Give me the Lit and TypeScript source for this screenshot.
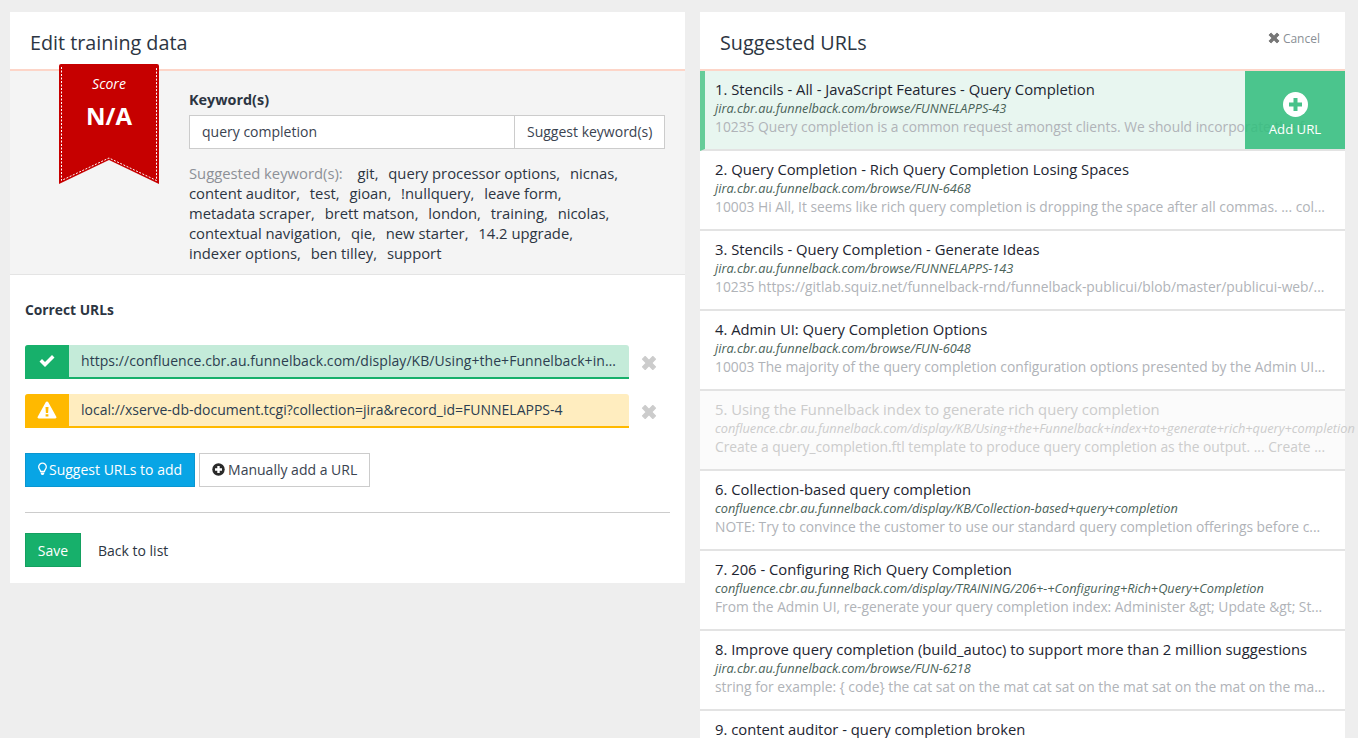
import { LitElement, html, css } from "lit";
import { customElement } from "lit/decorators.js";

const times = html`<svg viewBox="0 0 16 16" class="x"><path d="M2.2 4.6 4.6 2.2 8 5.6l3.4-3.4 2.4 2.4L10.4 8l3.4 3.4-2.4 2.4L8 10.4l-3.4 3.4-2.4-2.4L5.6 8z" fill="currentColor" stroke="currentColor" stroke-width="1" stroke-linejoin="round"/></svg>`;

const items = [
  ["1. Stencils - All - JavaScript Features - Query Completion", "jira.cbr.au.funnelback.com/browse/FUNNELAPPS-43", "10235 Query completion is a common request amongst clients. We should incorporate the f..."],
  ["2. Query Completion - Rich Query Completion Losing Spaces", "jira.cbr.au.funnelback.com/browse/FUN-6468", "10003 Hi All, It seems like rich query completion is dropping the space after all commas. ... col..."],
  ["3. Stencils - Query Completion - Generate Ideas", "jira.cbr.au.funnelback.com/browse/FUNNELAPPS-143", "10235 https://gitlab.squiz.net/funnelback-rnd/funnelback-publicui/blob/master/publicui-web/..."],
  ["4. Admin UI: Query Completion Options", "jira.cbr.au.funnelback.com/browse/FUN-6048", "10003 The majority of the query completion configuration options presented by the Admin UI..."],
  ["5. Using the Funnelback index to generate rich query completion", "confluence.cbr.au.funnelback.com/display/KB/Using+the+Funnelback+index+to+generate+rich+query+completion", "Create a query_completion.ftl template to produce query completion as the output. ... Create ..."],
  ["6. Collection-based query completion", "confluence.cbr.au.funnelback.com/display/KB/Collection-based+query+completion", "NOTE: Try to convince the customer to use our standard query completion offerings before c..."],
  ["7. 206 - Configuring Rich Query Completion", "confluence.cbr.au.funnelback.com/display/TRAINING/206+-+Configuring+Rich+Query+Completion", "From the Admin UI, re-generate your query completion index: Administer &gt; Update &gt; St..."],
  ["8. Improve query completion (build_autoc) to support more than 2 million suggestions", "jira.cbr.au.funnelback.com/browse/FUN-6218", "string for example: { code} the cat sat on the mat cat sat on the mat sat on the mat on the ma..."],
  ["9. content auditor - query completion broken", "", ""],
];

const keywords = ["git", "query processor options", "nicnas", "content auditor", "test", "gioan", "!nullquery", "leave form", "metadata scraper", "brett matson", "london", "training", "nicolas", "contextual navigation", "qie", "new starter", "14.2 upgrade", "indexer options", "ben tilley", "support"];

@customElement("app-root")
export class AppRoot extends LitElement {
  static styles = css`
    :host { display: block; height: 738px; overflow: hidden; background: #eee; font-family: "Open Sans", sans-serif; font-size: 14px; color: #2c3542; }
    * { box-sizing: border-box; }
    .page { display: flex; align-items: flex-start; padding: 12px 13px 0 10px; gap: 15px; }
    .panel { background: #fff; position: relative; }
    .left { width: 675px; height: 571px; }
    .right { width: 645px; }
    .head { height: 59px; border-bottom: 2px solid #fdd5c8; display: flex; align-items: center; justify-content: space-between; padding: 5px 25px 0 20px; }
    h2 { margin: 0; font-size: 19.75px; font-weight: 400; line-height: 28px; color: #2c3542; }
    .cancel { display: flex; align-items: center; gap: 2px; font-size: 12px; color: #8a8f96; margin-top: -10px; }
    .cancel .x { width: 14px; height: 14px; color: #777; }
    .ribbon { position: absolute; left: 49px; top: 52px; width: 100px; height: 120px; color: #fff; text-align: center; }
    .ribbon svg { position: absolute; inset: 0; }
    .ribbon .sc { position: absolute; left: 0; right: 0; top: 10px; font-style: italic; font-size: 14px; line-height: 20px; }
    .ribbon .na { position: absolute; left: 0; right: 0; top: 35px; font-weight: 700; font-size: 24px; line-height: 34px; }
    .kw { height: 204px; background: #f4f4f4; border-bottom: 1px solid #e4e4e4; padding: 18px 20px 0 179px; }
    label { display: block; font-weight: 700; font-size: 14.4px; line-height: 22px; margin-bottom: 4px; }
    .ig { display: flex; height: 34px; width: 476px; background: #fff; border: 1px solid #ccc; }
    .ig .in { flex: 1; padding: 0 12px; line-height: 32px; font-size: 14px; color: #3a4350; border-right: 1px solid #ccc; }
    .ig .bt { width: 149px; flex: none; padding-left: 12px; line-height: 32px; font-size: 14px; color: #3a4350; white-space: nowrap; }
    .sug { margin-top: 14px; line-height: 20px; font-size: 14.8px; color: #2c3542; width: 450px; }
    .sug .lbl { color: #8c9097; margin-right: 11px; }
    .sug .k { margin-right: 6px; display: inline-block; }
    .body { padding: 25px 15px 0; }
    .cu { font-weight: 700; font-size: 13.8px; line-height: 20px; }
    .urls { margin-top: 25px; display: flex; flex-direction: column; gap: 15px; }
    .urlrow { display: flex; align-items: center; }
    .url { width: 604px; height: 34px; flex: none; display: flex; border-radius: 3px 3px 0 0; overflow: hidden; border-bottom: 2px solid; font-size: 14px; line-height: 32px; }
    .url.ok { background: #c4ebd9; border-color: #17b06b; }
    .url.warn { background: #ffedbf; border-color: #ffb900; }
    .url .ic { width: 44px; flex: none; display: flex; align-items: center; justify-content: center; }
    .url.ok .ic { background: #17b06b; }
    .url.warn .ic { background: #ffb900; }
    .url .t { padding-left: 12px; padding-right: 9px; flex: 1; min-width: 0; white-space: nowrap; overflow: hidden; text-overflow: ellipsis; color: #2c3e50; }
    .url.ok .t { letter-spacing: 0.06px; }
    .urlrow .x { width: 18px; height: 18px; margin-left: 11px; color: #ccc; margin-top: 2px; }
    .btns { display: flex; gap: 4px; margin-top: 25px; }
    .btn { height: 34px; display: flex; align-items: center; gap: 3px; padding: 0 12px 2px; font-size: 14px; border: 1px solid #ccc; color: #3a4350; background: #fff; }
    .btn.blue { background: #08a5e5; border-color: #0a96d0; color: #fff; gap: 2px; padding-right: 12px; }
    .btn svg { flex: none; }
    hr { border: 0; border-top: 1px solid #ccc; margin: 25px 0 20px; }
    .foot { display: flex; align-items: center; gap: 17px; }
    .save { height: 34px; width: 56px; background: #17b06b; border: 1px solid #14a060; color: #fff; text-align: center; line-height: 34px; font-size: 14px; }
    .item { height: 80px; border-bottom: 2px solid #e3e3e3; padding: 8px 15px 0; position: relative; overflow: hidden; }
    .item .a { font-size: 14.8px; line-height: 21px; color: #1d2531; white-space: nowrap; }
    .item .u { font-size: 12.75px; font-style: italic; line-height: 16px; color: #4a6258; white-space: nowrap; }
    .item .d { font-size: 13.8px; line-height: 19px; margin-top: 1px; color: #b0b3b8; white-space: nowrap; }
    .item.sel { background: #e8f6f0; border-left: 5px solid #66cc99; padding-left: 10px; }
    .item.dim { background: #fbfbfb; overflow: visible; }
    .item.dim .a, .item.dim .u, .item.dim .d { color: #ccc; }
    .add { position: absolute; right: 0; top: 0; bottom: 0; width: 100px; background: rgba(52, 190, 126, 0.88); color: #fff; display: flex; flex-direction: column; align-items: center; justify-content: flex-start; padding-top: 21px; font-size: 13.2px; line-height: 18px; }
    .add svg { display: block; margin-bottom: 3px; }
  `;

  render() {
    return html`<div class="page">
      <section class="panel left">
        <div class="head"><h2>Edit training data</h2></div>
        <div class="ribbon">
          <svg viewBox="0 0 100 120" width="100" height="120">
            <path d="M2 0H98Q100 0 100 2V120L50 96 0 120V2Q0 0 2 0Z" fill="#c60000"/>
            <path d="M2.5 3V116.5L50 94 97.500 116.5V3" fill="none" stroke="#fff" stroke-width="1" stroke-dasharray="2 1.500"/>
          </svg>
          <div class="sc">Score</div>
          <div class="na">N/A</div>
        </div>
        <div class="kw">
          <label>Keyword(s)</label>
          <div class="ig"><div class="in">query completion</div><div class="bt">Suggest keyword(s)</div></div>
          <div class="sug"><span class="lbl">Suggested keyword(s):</span> ${keywords.map((k, i) => html`<span class="k">${k}${i < keywords.length - 1 ? "," : ""}</span> `)}</div>
        </div>
        <div class="body">
          <div class="cu">Correct URLs</div>
          <div class="urls">
            <div class="urlrow">
              <div class="url ok"><span class="ic"><svg width="18" height="14" viewBox="0 0 18 14"><path d="M1.500 7.500 4 5l3 3 7-7 2.500 2.500L7 13z" fill="#fff"/></svg></span><span class="t">https://confluence.cbr.au.funnelback.com/display/KB/Using+the+Funnelback+index+to+generate+rich+query+completion</span></div>
              ${times}
            </div>
            <div class="urlrow">
              <div class="url warn"><span class="ic"><svg width="20" height="18" viewBox="0 0 20 18"><path fill-rule="evenodd" d="M10 .5c.6 0 1 .3 1.300.8l8 14.500c.5 1-.2 1.700-1.100 1.700H1.800c-.9 0-1.600-.7-1.100-1.700l8-14.500C9 .8 9.400.5 10 .5ZM8.500 6l.4 6h2.200l.4-6ZM8.600 13.200v2.300h2.800v-2.300Z" fill="#fff"/></svg></span><span class="t">local://xserve-db-document.tcgi?collection=jira&record_id=FUNNELAPPS-4</span></div>
              ${times}
            </div>
          </div>
          <div class="btns">
            <div class="btn blue"><svg width="9" height="14" viewBox="0.500 0 9 14"><path d="M5 1.200a3.800 3.800 0 0 1 3.800 3.800c0 1.800-1.500 2.700-1.900 4.500H3.100C2.700 7.700 1.200 6.800 1.200 5A3.800 3.800 0 0 1 5 1.200Z" fill="none" stroke="#fff" stroke-width="1.300"/><path d="M3.300 10.600h3.400v1.200L5.800 13H4.200l-.9-1.200z" fill="#fff"/></svg>Suggest URLs to add</div>
            <div class="btn"><svg width="13" height="13" viewBox="0 0 13 13"><circle cx="6.500" cy="6.500" r="6.200" fill="#2a2a2a"/><path d="M5.300 3h2.400v2.300H10v2.400H7.700V10H5.300V7.700H3V5.300h2.300z" fill="#fff"/></svg>Manually add a URL</div>
          </div>
          <hr />
          <div class="foot"><div class="save">Save</div><div>Back to list</div></div>
        </div>
      </section>
      <section class="panel right">
        <div class="head"><h2>Suggested URLs</h2><div class="cancel">${times}Cancel</div></div>
        ${items.map((it, i) => html`<div class="item ${i === 0 ? "sel" : ""} ${i === 4 ? "dim" : ""}">
          <div class="a">${it[0]}</div>
          <div class="u">${it[1]}</div>
          <div class="d">${it[2]}</div>
          ${i === 0 ? html`<div class="add"><svg width="25" height="25" viewBox="0 0 25 25"><circle cx="12.500" cy="12.500" r="12.500" fill="#fff"/><path d="M10.500 6h4v4.500H19v4h-4.500V19h-4v-4.500H6v-4h4.500z" fill="#48c28a"/></svg>Add URL</div>` : ""}
        </div>`)}
      </section>
    </div>`;
  }
}
